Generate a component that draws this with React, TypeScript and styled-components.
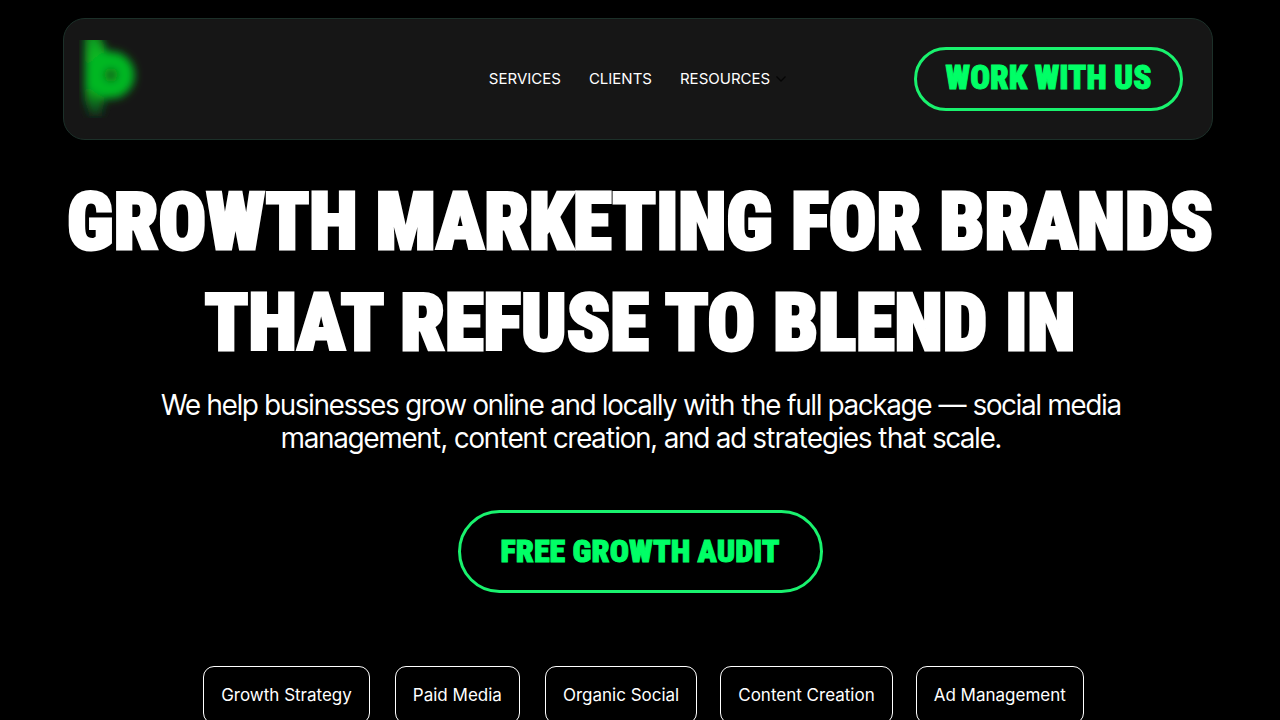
import React from "react";
import styled, { createGlobalStyle, css } from "styled-components";

const GREEN = "#00ff66";
const BORDER_GREEN = "#19f26e";

const GlobalStyle = createGlobalStyle`
  *, *::before, *::after { box-sizing: border-box; }
  body {
    margin: 0;
    background: #000;
    color: #fff;
    font-family: Inter, "Liberation Sans", sans-serif;
    overflow-x: hidden;
    scrollbar-width: none;
  }
`;

const displayFont = css`
  font-family: "Roboto Condensed", "Liberation Sans Narrow", sans-serif;
  font-weight: 900;
  text-transform: uppercase;
`;

const Header = styled.header`
  display: grid;
  grid-template-columns: 1fr auto 1fr;
  align-items: center;
  height: 122px;
  margin: 18px 67px 0 63px;
  padding: 0 29px;
  background: #161616;
  border: 1px solid #1c3029;
  border-radius: 22px;
`;

const LogoLink = styled.a`
  justify-self: start;
  display: block;
  height: 78px;
  margin-left: -14px;
`;

const Nav = styled.nav`
  display: flex;
  align-items: center;
  gap: 28px;
`;

const NavLink = styled.a`
  display: flex;
  align-items: center;
  gap: 5px;
  color: #fff;
  font-size: 15px;
  line-height: 20px;
  text-decoration: none;
`;

const OutlineLink = styled.a<{ $large?: boolean }>`
  ${displayFont}
  display: flex;
  align-items: center;
  justify-content: center;
  justify-self: end;
  width: ${(p) => (p.$large ? 365 : 269)}px;
  height: ${(p) => (p.$large ? 83 : 64)}px;
  padding-bottom: 2px;
  border: 3px solid ${BORDER_GREEN};
  border-radius: 42px;
  color: ${GREEN};
  font-size: ${(p) => (p.$large ? 32 : 33)}px;
  line-height: 40px;
  white-space: nowrap;
  text-decoration: none;
  -webkit-text-stroke: 1px ${GREEN};
`;

const Hero = styled.main`
  display: flex;
  flex-direction: column;
  align-items: center;
  padding-top: 32px;
`;

const Title = styled.h1`
  ${displayFont}
  margin: 0;
  font-size: 79px;
  line-height: 101px;
  text-align: center;
  -webkit-text-stroke: 3px #fff;
`;

const Line = styled.span`
  display: block;
  white-space: nowrap;
`;

const Subtitle = styled.p`
  max-width: 1000px;
  margin: 15px 0 55px;
  padding-left: 3px;
  font-family: "Inter Tight", Inter, sans-serif;
  font-size: 28px;
  line-height: 33px;
  text-align: center;
`;

const Services = styled.ul`
  display: flex;
  gap: 23px;
  margin: 73px 0 0;
  padding: 0 0 0 7px;
  list-style: none;
`;

const Service = styled.li`
  padding: 0 17px;
  border: 1px solid #fff;
  border-radius: 11px;
  font-size: 17px;
  line-height: 56px;
  white-space: nowrap;

  &:nth-child(-n + 2) {
    margin-right: 2px;
  }
`;

const services = [
  "Growth Strategy",
  "Paid Media",
  "Organic Social",
  "Content Creation",
  "Ad Management",
];

function Logo() {
  return (
    <svg width="78" height="78" viewBox="0 0 78 78" aria-hidden="true">
      <defs>
        <filter id="glow" x="-20" y="-20" width="118" height="118" filterUnits="userSpaceOnUse">
          <feGaussianBlur stdDeviation="4" />
        </filter>
        <linearGradient id="stem" x1="0" y1="0" x2="0" y2="1">
          <stop offset="0" stopColor="#0a8a1e" />
          <stop offset="0.25" stopColor="#08b422" />
          <stop offset="0.65" stopColor="#06b822" />
          <stop offset="0.8" stopColor="#0a7a1c" />
          <stop offset="1" stopColor="#12301a" />
        </linearGradient>
      </defs>
      <g filter="url(#glow)">
        <path d="M6 -8 H20 L30 18 L26 58 L22 76 H11 L6 60 Z" fill="url(#stem)" />
        <circle cx="32" cy="35" r="20" fill="#0a5a18" />
        <circle cx="32" cy="35" r="15" fill="none" stroke="#06b822" strokeWidth="17" />
      </g>
    </svg>
  );
}

function Chevron() {
  return (
    <svg width="12" height="8" viewBox="0 0 12 8" fill="none" stroke="#050505" strokeWidth="1.3" aria-hidden="true">
      <path d="M1.5 1.5 L6 6 L10.5 1.5" />
    </svg>
  );
}

export default function App() {
  return (
    <>
      <GlobalStyle />
      <Header>
        <LogoLink href="#home" aria-label="Home">
          <Logo />
        </LogoLink>
        <Nav>
          <NavLink href="#services">SERVICES</NavLink>
          <NavLink href="#clients">CLIENTS</NavLink>
          <NavLink href="#resources">
            RESOURCES
            <Chevron />
          </NavLink>
        </Nav>
        <OutlineLink href="#contact">Work with us</OutlineLink>
      </Header>
      <Hero>
        <Title>
          <Line>Growth marketing for brands</Line>
          <Line>that refuse to blend in</Line>
        </Title>
        <Subtitle>
          We help businesses grow online and locally with the full package — social media
          management, content creation, and ad strategies that scale.
        </Subtitle>
        <OutlineLink $large href="#audit">Free growth audit</OutlineLink>
        <Services>
          {services.map((name) => (
            <Service key={name}>{name}</Service>
          ))}
        </Services>
      </Hero>
    </>
  );
}
